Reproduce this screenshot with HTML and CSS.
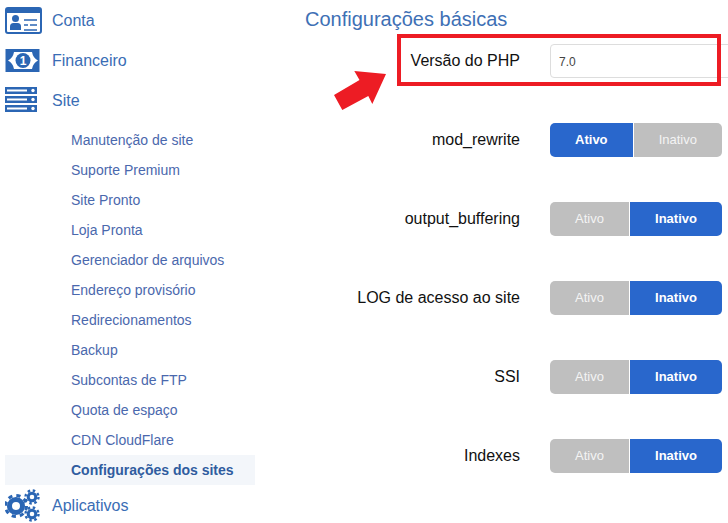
FILE: index.html
```html
<!DOCTYPE html>
<html>
<head>
	<title>Configurações básicas</title>
	<meta charset="utf-8">
	<link rel="stylesheet" href="styles.css">
</head>
<body>
	<div class="page">

		<div class="menu">
			<a class="menu__item">
				<svg class="menu__icon" width="37" height="40" viewBox="0 0 37 40">
					<rect x="1" y="8" width="35" height="25" rx="2" fill="#fff" stroke="#2b66b4" stroke-width="2"/>
					<rect x="1" y="8" width="35" height="5" fill="#2b66b4"/>
					<circle cx="10.500" cy="18.500" r="3.500" fill="#2b66b4"/>
					<path d="M5 30v-3.500q0-3.500 3.500-3.500h4q3.500 0 3.500 3.500v3.500z" fill="#2b66b4"/>
					<path d="M19 20h13M19 25h4M25 25h7M19 30h13" stroke="#2b66b4" stroke-width="1.600"/>
				</svg>
				Conta
			</a>
			<a class="menu__item">
				<svg class="menu__icon" width="37" height="40" viewBox="0 0 37 40">
					<rect x="0.500" y="9" width="34" height="23" fill="#2b66b4"/>
					<path d="M3 20.500q5-2.500 6-8.500h18q1 6 6 8.500-5 2.500-6 8.500h-18q-1-6-6-8.500z" fill="#fff"/>
					<circle cx="18" cy="20.500" r="7.500" fill="#2b66b4"/>
					<text class="menu__bill" x="18" y="25" text-anchor="middle">1</text>
				</svg>
				Financeiro
			</a>
			<a class="menu__item">
				<svg class="menu__icon" width="37" height="40" viewBox="0 0 37 40">
					<rect x="0" y="7" width="32" height="7" fill="#2b66b4"/>
					<rect x="0" y="16" width="32" height="7" fill="#2b66b4"/>
					<rect x="0" y="25" width="32" height="7" fill="#2b66b4"/>
					<path d="M2 10.500h20M2 19.500h20M2 28.500h20" stroke="#fff" stroke-width="2"/>
					<circle cx="28" cy="10.500" r="1.700" fill="#fff"/>
					<circle cx="28" cy="19.500" r="1.700" fill="#fff"/>
					<circle cx="28" cy="28.500" r="1.700" fill="#fff"/>
				</svg>
				Site
			</a>
			<div class="menu__sub">
				<a class="menu__link">Manutenção de site</a>
				<a class="menu__link">Suporte Premium</a>
				<a class="menu__link">Site Pronto</a>
				<a class="menu__link">Loja Pronta</a>
				<a class="menu__link">Gerenciador de arquivos</a>
				<a class="menu__link">Endereço provisório</a>
				<a class="menu__link">Redirecionamentos</a>
				<a class="menu__link">Backup</a>
				<a class="menu__link">Subcontas de FTP</a>
				<a class="menu__link">Quota de espaço</a>
				<a class="menu__link">CDN CloudFlare</a>
				<a class="menu__link menu__link_active">Configurações dos sites</a>
			</div>
			<a class="menu__item">
				<svg class="menu__icon" width="37" height="40" viewBox="0 0 37 40">
					<g fill="none" stroke="#2b66b4">
						<circle cx="11" cy="21" r="6.500" stroke-width="5"/>
						<circle cx="11" cy="21" r="10.500" stroke-width="3" stroke-dasharray="4.200 4.050"/>
						<circle cx="27" cy="12" r="3.800" stroke-width="3"/>
						<circle cx="27" cy="12" r="6.500" stroke-width="2.400" stroke-dasharray="2.500 2.600"/>
						<circle cx="27" cy="29" r="3.800" stroke-width="3"/>
						<circle cx="27" cy="29" r="6.500" stroke-width="2.400" stroke-dasharray="2.500 2.600"/>
					</g>
				</svg>
				Aplicativos
			</a>
		</div>

		<div class="settings">
			<h2 class="settings__title">Configurações básicas</h2>
			<div class="settings__form">
				<div class="settings__row">
					<div class="settings__label">Versão do PHP</div>
					<div class="settings__select">7.0</div>
				</div>
				<div class="settings__row">
					<div class="settings__label">mod_rewrite</div>
					<div class="toggle">
						<div class="toggle__option toggle__option_on">Ativo</div>
						<div class="toggle__option">Inativo</div>
					</div>
				</div>
				<div class="settings__row">
					<div class="settings__label">output_buffering</div>
					<div class="toggle">
						<div class="toggle__option">Ativo</div>
						<div class="toggle__option toggle__option_on">Inativo</div>
					</div>
				</div>
				<div class="settings__row">
					<div class="settings__label">LOG de acesso ao site</div>
					<div class="toggle">
						<div class="toggle__option">Ativo</div>
						<div class="toggle__option toggle__option_on">Inativo</div>
					</div>
				</div>
				<div class="settings__row">
					<div class="settings__label">SSI</div>
					<div class="toggle">
						<div class="toggle__option">Ativo</div>
						<div class="toggle__option toggle__option_on">Inativo</div>
					</div>
				</div>
				<div class="settings__row">
					<div class="settings__label">Indexes</div>
					<div class="toggle">
						<div class="toggle__option">Ativo</div>
						<div class="toggle__option toggle__option_on">Inativo</div>
					</div>
				</div>
			</div>
		</div>

		<div class="mark"></div>
		<svg class="mark__arrow" width="54" height="41" viewBox="0 0 54 41">
			<polygon points="20.300,0 25.500,9 0,24 8.300,39 34.300,25 38.300,33 52,3" fill="#ed1c24"/>
		</svg>
	</div>
</body>
</html>
```

FILE: styles.css
```css
html, body {
	margin: 0;
	background: #fff;
	overflow: hidden;
}
.page {
	display: flex;
	height: 523px;
	overflow: hidden;
	font-family: "Liberation Sans", Arial, sans-serif;
}

/* menu on the left */
.menu {
	flex: none;
	width: 250px;
	margin-left: 5px;
}
.menu__item {
	display: flex;
	align-items: center;
	gap: 10px;
	box-sizing: border-box;
	height: 40px;
	padding-top: 2px;
	font-size: 16px;
	color: #3a6db5;
}
.menu__icon {
	flex: none;
	margin-top: -2px;
}
.menu__bill {
	font-family: "Liberation Sans", Arial, sans-serif;
	font-size: 12px;
	font-weight: bold;
	fill: #fff;
}
.menu__sub {
	padding-top: 5px;
}
.menu__link {
	display: block;
	height: 30px;
	line-height: 30px;
	padding-left: 66px;
	font-size: 14px;
	color: #4a68ad;
}
.menu__link_active {
	background: #f3f6fa;
	color: #2f5c9f;
	font-weight: bold;
}

/* form */
.settings {
	flex: none;
	width: 430px;
	margin-left: 50px;
}
.settings__title {
	margin: 0;
	height: 44px;
	line-height: 38px;
	font-size: 20px;
	font-weight: normal;
	color: #3e70b5;
}
.settings__form {
	display: flex;
	flex-direction: column;
	gap: 45px;
}
.settings__row {
	display: flex;
	align-items: center;
	gap: 30px;
	height: 34px;
}
.settings__label {
	flex: none;
	width: 215px;
	text-align: right;
	font-size: 16px;
	color: #111;
}
.settings__select {
	box-sizing: border-box;
	flex: none;
	width: 185px;
	height: 34px;
	line-height: 35px;
	padding-left: 8px;
	border: 1px solid #ddd;
	border-radius: 4px;
	font-size: 12px;
	color: #444;
}

.toggle {
	display: flex;
	flex: none;
	gap: 1px;
	width: 172px;
	height: 34px;
	border-radius: 5px;
	overflow: hidden;
}
.toggle__option {
	flex: 1 1 auto;
	line-height: 33px;
	text-align: center;
	font-size: 13px;
	color: #f4f4f4;
	background: #bfbfbf;
}
.toggle__option_on {
	color: #fff;
	font-weight: bold;
	background: #2967cc;
}

/* red annotation over the screenshot */
.mark {
	position: absolute;
	box-sizing: border-box;
	left: 397px;
	top: 34px;
	width: 324px;
	height: 52px;
	border: 4px solid #ed1c24;
}
.mark__arrow {
	position: absolute;
	left: 334px;
	top: 71px;
}
```
